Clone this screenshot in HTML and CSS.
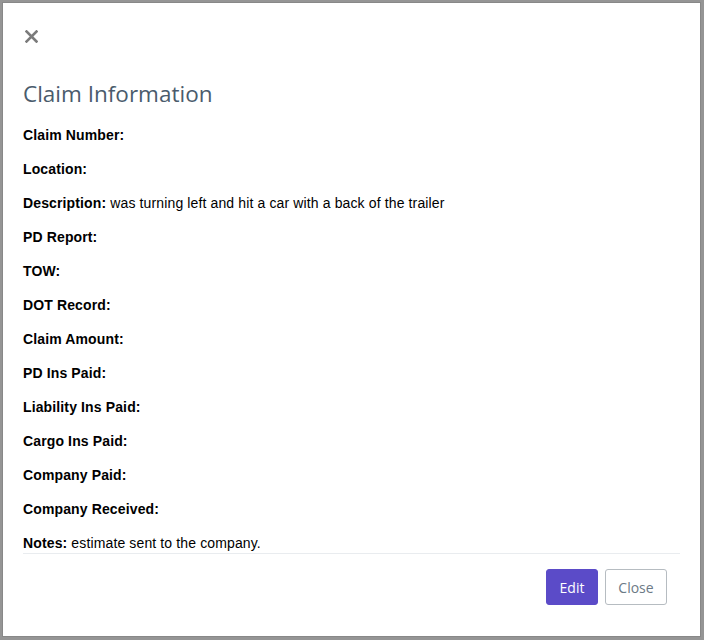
FILE: index.html
```html
<!DOCTYPE html>
<html>
<head>
<meta charset="utf-8">
<link rel="stylesheet" href="styles.css">
</head>
<body>
<div class="modal">
  <div class="modal-header">
    <button class="close" aria-label="Close">
      <svg width="13" height="13" viewBox="0 0 13 13"><path d="M1.5 1.5L11.5 11.5M11.5 1.5L1.5 11.5" stroke="#7b7b7b" stroke-width="2.6" stroke-linecap="square"/></svg>
    </button>
    <h4 class="title">Claim Information</h4>
  </div>
  <div class="modal-body">
    <p><b>Claim Number:</b></p>
    <p><b>Location:</b></p>
    <p><b>Description:</b> was turning left and hit a car with a back of the trailer</p>
    <p><b>PD Report:</b></p>
    <p><b>TOW:</b></p>
    <p><b>DOT Record:</b></p>
    <p><b>Claim Amount:</b></p>
    <p><b>PD Ins Paid:</b></p>
    <p><b>Liability Ins Paid:</b></p>
    <p><b>Cargo Ins Paid:</b></p>
    <p><b>Company Paid:</b></p>
    <p><b>Company Received:</b></p>
    <p><b>Notes:</b> estimate sent to the company.</p>
  </div>
  <div class="modal-footer">
    <button class="btn btn-primary">Edit</button>
    <button class="btn btn-outline">Close</button>
  </div>
</div>
</body>
</html>
```
FILE: styles.css
```css
html, body {
  margin: 0;
  padding: 0;
  height: 100%;
}
body {
  background: #959595;
  padding: 2px 3px 3px 2px;
  box-sizing: border-box;
}
.modal {
  background: #fff;
  border: 1px solid #888;
  height: 100%;
  box-sizing: border-box;
  padding: 0 20px;
  display: flex;
  flex-direction: column;
}
.modal-header {
  padding-top: 27px;
}
.close {
  display: block;
  background: none;
  border: 0;
  padding: 0;
  margin: 0 0 0 2px;
  width: 13px;
  height: 13px;
  line-height: 0;
}
.title {
  margin: 36px 0 0 0;
  font-family: "Open Sans", sans-serif;
  font-weight: 400;
  font-size: 22.5px;
  line-height: 30px;
  color: #4a5b6c;
}
.modal-body {
  padding-top: 16px;
  font-family: "Liberation Sans", Arial, sans-serif;
  font-size: 14px;
  letter-spacing: 0.13px;
  color: #000;
}
.modal-body p {
  margin: 0 0 14px 0;
  line-height: 20px;
}
.modal-body p:last-child {
  margin-bottom: 0;
}
.modal-footer {
  border-top: 1px solid #e9ecef;
  display: flex;
  justify-content: flex-end;
  gap: 7px;
  padding: 15px 13px 0 0;
}
.btn {
  font-family: "Open Sans", sans-serif;
  font-size: 14px;
  height: 36px;
  border-radius: 3px;
  cursor: pointer;
}
.btn-primary {
  background: #5b4bc8;
  color: #fff;
  border: 1px solid #5b4bc8;
  width: 52px;
}
.btn-outline {
  background: #fff;
  color: #6c7a86;
  border: 1px solid #b6bcc1;
  width: 62px;
}
```
